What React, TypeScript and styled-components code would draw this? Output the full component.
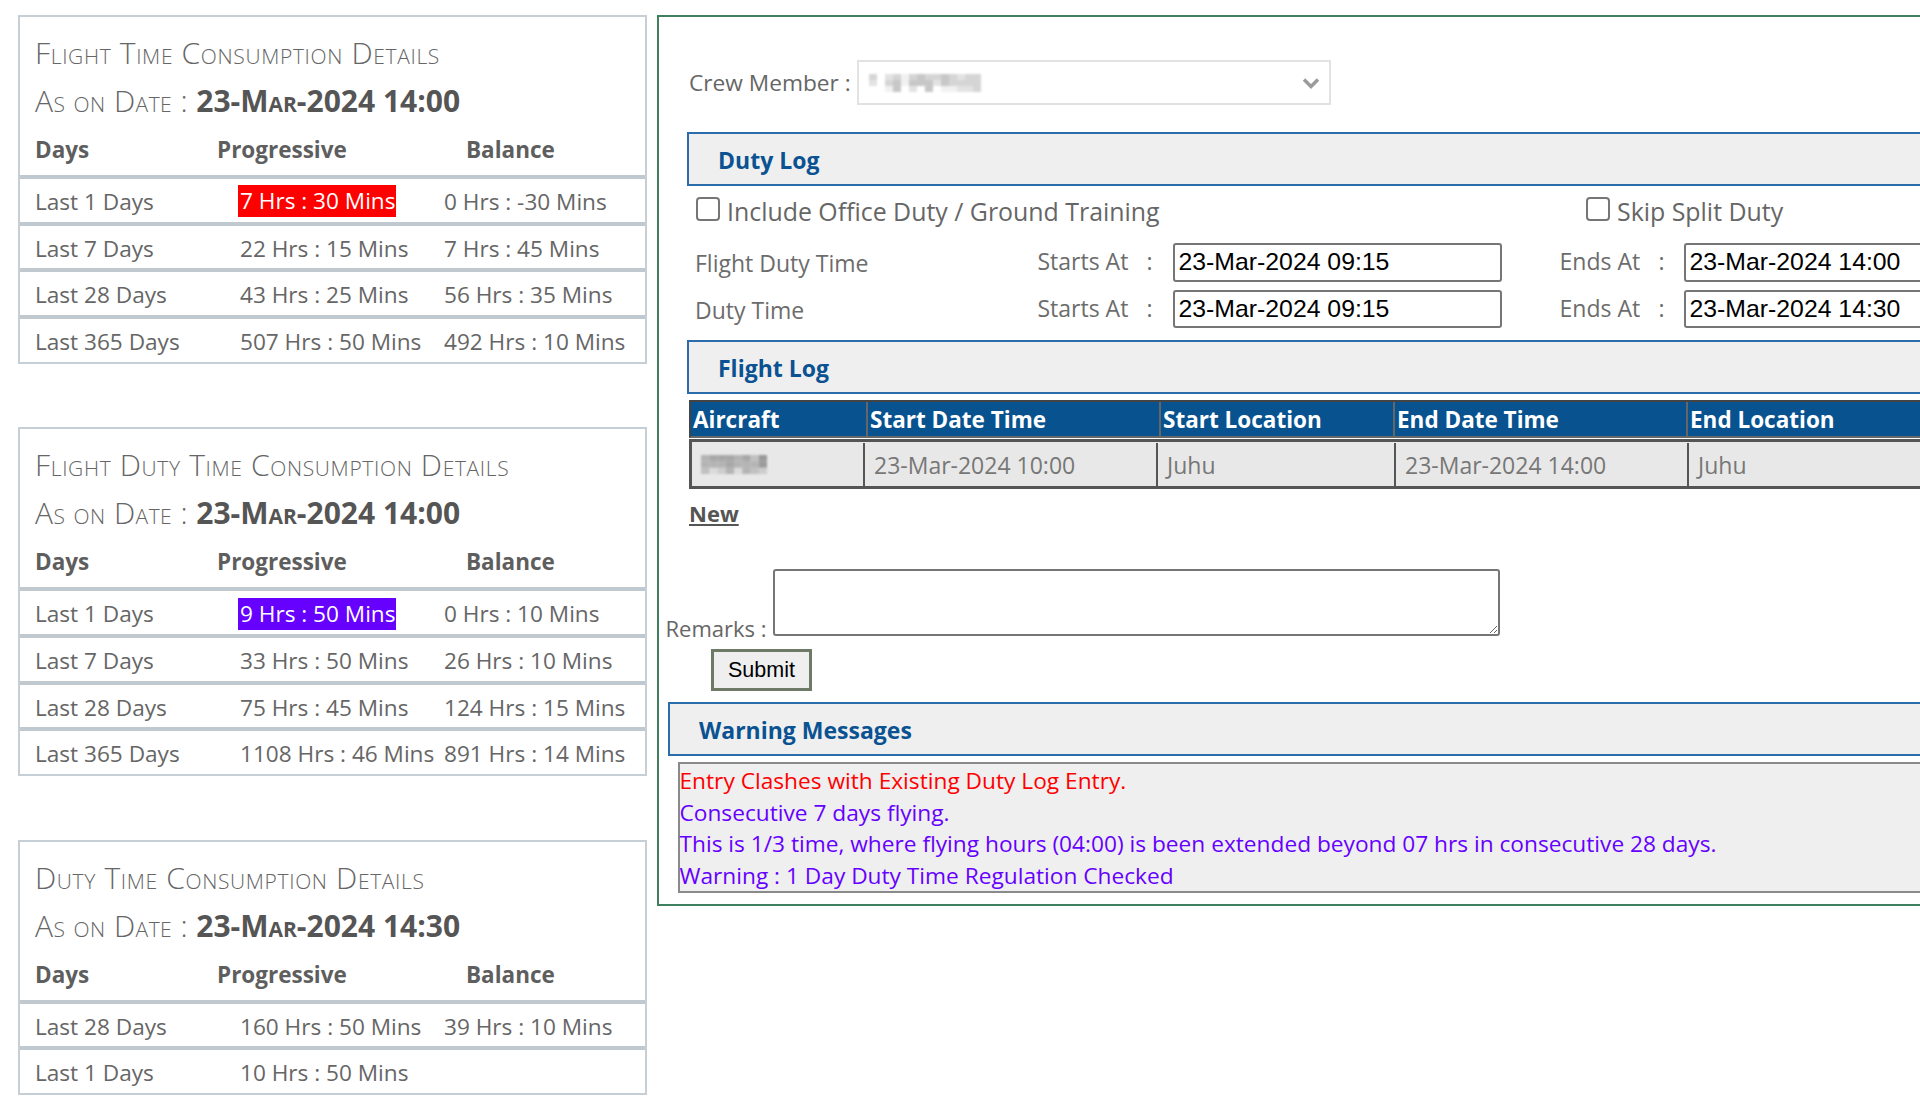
import React from "react";
import styled, { createGlobalStyle } from "styled-components";

const BODY_FONT = `"Open Sans", "Noto Sans", sans-serif`;
const FIELD_FONT = `"Liberation Sans", Arial, sans-serif`;

interface Consumption {
  days: string;
  progressive: string;
  balance?: string;
  alert?: string;
}

interface ConsumptionPanel {
  title: string;
  date: string;
  rows: Consumption[];
}

const panels: ConsumptionPanel[] = [
  {
    title: "Flight Time Consumption Details",
    date: "23-Mar-2024 14:00",
    rows: [
      { days: "Last 1 Days", progressive: "7 Hrs : 30 Mins", balance: "0 Hrs : -30 Mins", alert: "#ff0000" },
      { days: "Last 7 Days", progressive: "22 Hrs : 15 Mins", balance: "7 Hrs : 45 Mins" },
      { days: "Last 28 Days", progressive: "43 Hrs : 25 Mins", balance: "56 Hrs : 35 Mins" },
      { days: "Last 365 Days", progressive: "507 Hrs : 50 Mins", balance: "492 Hrs : 10 Mins" },
    ],
  },
  {
    title: "Flight Duty Time Consumption Details",
    date: "23-Mar-2024 14:00",
    rows: [
      { days: "Last 1 Days", progressive: "9 Hrs : 50 Mins", balance: "0 Hrs : 10 Mins", alert: "#6600ff" },
      { days: "Last 7 Days", progressive: "33 Hrs : 50 Mins", balance: "26 Hrs : 10 Mins" },
      { days: "Last 28 Days", progressive: "75 Hrs : 45 Mins", balance: "124 Hrs : 15 Mins" },
      { days: "Last 365 Days", progressive: "1108 Hrs : 46 Mins", balance: "891 Hrs : 14 Mins" },
    ],
  },
  {
    title: "Duty Time Consumption Details",
    date: "23-Mar-2024 14:30",
    rows: [
      { days: "Last 28 Days", progressive: "160 Hrs : 50 Mins", balance: "39 Hrs : 10 Mins" },
      { days: "Last 1 Days", progressive: "10 Hrs : 50 Mins" },
    ],
  },
];

const warnings = [
  { text: "Entry Clashes with Existing Duty Log Entry.", color: "#ff0000" },
  { text: "Consecutive 7 days flying.", color: "#6600ff" },
  { text: "This is 1/3 time, where flying hours (04:00) is been extended beyond 07 hrs in consecutive 28 days.", color: "#6600ff" },
  { text: "Warning : 1 Day Duty Time Regulation Checked", color: "#6600ff" },
];

const crewMosaic = [
  [3, 0, 2, 3, 1, 3, 4, 3, 3, 4, 3, 2, 3, 3],
  [2, 0, 3, 4, 1, 4, 4, 4, 2, 4, 3, 3, 3, 3],
  [0, 0, 1, 4, 0, 2, 0, 4, 0, 1, 1, 2, 2, 3],
];

const aircraftMosaic = [
  [4, 5, 5, 5, 4, 5, 3, 6],
  [4, 4, 4, 5, 4, 4, 4, 6],
  [3, 1, 2, 4, 1, 4, 3, 2],
];

function Mosaic(props: { cells: number[][]; width: number; height: number; shade: string }) {
  const rows = props.cells.length;
  const cols = props.cells[0].length;
  return (
    <MosaicSvg width={props.width} height={props.height} viewBox={`0 0 ${cols} ${rows}`} preserveAspectRatio="none">
      {props.cells.map((row, y) =>
        row.map((v, x) => (
          <rect key={`${x}-${y}`} x={x} y={y} width={1} height={1} fill={props.shade} opacity={v / 6} />
        ))
      )}
    </MosaicSvg>
  );
}

function Chevron() {
  return (
    <svg width="18" height="12" viewBox="0 0 18 12">
      <path d="M2 2.5 L9 9.5 L16 2.5" fill="none" stroke="#9b9b9b" strokeWidth="3.4" />
    </svg>
  );
}

export default function App() {
  return (
    <Page>
      <GlobalStyle />
      <LeftColumn>
        {panels.map((panel) => (
          <Panel key={panel.title}>
            <PanelTitle>{panel.title}</PanelTitle>
            <PanelDate>
              As on Date : <strong>{panel.date}</strong>
            </PanelDate>
            <HeadRow>
              <span>Days</span>
              <span>Progressive</span>
              <span>Balance</span>
            </HeadRow>
            {panel.rows.map((row, i) => (
              <DataRow key={row.days} $last={i === panel.rows.length - 1}>
                <span>{row.days}</span>
                {row.alert ? <Alert $color={row.alert}>{row.progressive}</Alert> : <span>{row.progressive}</span>}
                <span>{row.balance}</span>
              </DataRow>
            ))}
          </Panel>
        ))}
      </LeftColumn>

      <MainPanel>
        <CrewRow>
          <CrewLabel>Crew Member :</CrewLabel>
          <CrewSelect>
            <Mosaic cells={crewMosaic} width={112} height={18} shade="#ababab" />
            <Chevron />
          </CrewSelect>
        </CrewRow>

        <SectionHeader $top={27}>Duty Log</SectionHeader>
        <CheckRow>
          <CheckLabel $width={890}>
            <Check type="checkbox" />
            Include Office Duty / Ground Training
          </CheckLabel>
          <CheckLabel>
            <Check type="checkbox" />
            Skip Split Duty
          </CheckLabel>
        </CheckRow>
        <TimeRow $first>
          <TimeName>Flight Duty Time</TimeName>
          <span>Starts At</span>
          <span>:</span>
          <DateInput defaultValue="23-Mar-2024 09:15" />
          <span />
          <span>Ends At</span>
          <span>:</span>
          <DateInput defaultValue="23-Mar-2024 14:00" />
        </TimeRow>
        <TimeRow>
          <TimeName>Duty Time</TimeName>
          <span>Starts At</span>
          <span>:</span>
          <DateInput defaultValue="23-Mar-2024 09:15" />
          <span />
          <span>Ends At</span>
          <span>:</span>
          <DateInput defaultValue="23-Mar-2024 14:30" />
        </TimeRow>

        <SectionHeader $top={12}>Flight Log</SectionHeader>
        <LogHead>
          <span>Aircraft</span>
          <span>Start Date Time</span>
          <span>Start Location</span>
          <span>End Date Time</span>
          <span>End Location</span>
        </LogHead>
        <LogRow>
          <LogCell>
            <Mosaic cells={aircraftMosaic} width={66} height={19} shade="#9a9a9a" />
          </LogCell>
          <LogCell>23-Mar-2024 10:00</LogCell>
          <LogCell>Juhu</LogCell>
          <LogCell>23-Mar-2024 14:00</LogCell>
          <LogCell>Juhu</LogCell>
        </LogRow>
        <NewLink href="#new">New</NewLink>

        <RemarksRow>
          <RemarksLabel>Remarks :</RemarksLabel>
          <RemarksInput />
        </RemarksRow>
        <SubmitButton type="button">Submit</SubmitButton>

        <WarningHeader $top={11}>Warning Messages</WarningHeader>
        <WarningBox>
          {warnings.map((w) => (
            <WarningLine key={w.text} $color={w.color}>
              {w.text}
            </WarningLine>
          ))}
        </WarningBox>
      </MainPanel>
    </Page>
  );
}

const GlobalStyle = createGlobalStyle`
  html, body {
    margin: 0;
    background: #fff;
  }
  body {
    font-family: ${BODY_FONT};
    color: #666;
  }
  * {
    box-sizing: border-box;
  }
`;

const Page = styled.div`
  display: flex;
  align-items: flex-start;
  gap: 10px;
  width: 1920px;
  height: 1117px;
  padding: 15px 0 0 18px;
  overflow: hidden;
`;

const LeftColumn = styled.div`
  display: flex;
  flex-direction: column;
  gap: 63.6px;
  flex: 0 0 629px;
`;

const Panel = styled.section`
  border: 2px solid #c6ced6;
`;

const PanelTitle = styled.div`
  margin: 16px 0 0 15px;
  line-height: 40px;
  font-size: 30px;
  font-weight: 300;
  font-variant: small-caps;
  letter-spacing: 0.65px;
  white-space: nowrap;
`;

const PanelDate = styled.div`
  margin: 8px 0 0 15px;
  line-height: 40px;
  font-size: 30px;
  font-weight: 300;
  font-variant: small-caps;
  letter-spacing: 0.45px;
  white-space: nowrap;

  strong {
    font-weight: 700;
    letter-spacing: 0;
    color: #555;
  }
`;

const HeadRow = styled.div`
  display: grid;
  grid-template-columns: 182px 249px 1fr;
  height: 58px;
  padding: 9px 0 0 15px;
  line-height: 40px;
  font-size: 22.5px;
  font-weight: 700;
  color: #5e5e5e;
  border-bottom: 4px solid #c0c8d0;
`;

const DataRow = styled.div<{ $last?: boolean }>`
  display: grid;
  grid-template-columns: 205px 204px 1fr;
  align-items: center;
  height: ${(p) => (p.$last ? "42.7px" : "46.7px")};
  padding: 2px 0 0 15px;
  font-size: 22.6px;
  white-space: nowrap;
  border-bottom: ${(p) => (p.$last ? "0" : "4px solid #c0c8d0")};
`;

const Alert = styled.span<{ $color: string }>`
  justify-self: start;
  width: 158px;
  height: 32px;
  margin-left: -2px;
  padding-left: 2px;
  overflow: hidden;
  line-height: 32px;
  color: #fff;
  background: ${(p) => p.$color};
`;

const MainPanel = styled.main`
  flex: 0 0 1400px;
  padding-bottom: 11px;
  border: 2px solid #3f8060;
`;

const CrewRow = styled.div`
  display: flex;
  align-items: center;
  margin: 43px 0 0 30px;
  height: 45px;
  font-size: 22.7px;
`;

const CrewLabel = styled.span`
  flex: 0 0 167.5px;
  white-space: nowrap;
`;

const CrewSelect = styled.div`
  display: flex;
  align-items: center;
  justify-content: space-between;
  width: 474px;
  height: 45px;
  padding: 0 9px 0 10px;
  border: 2px solid #e2e2e2;
`;

const MosaicSvg = styled.svg`
  filter: blur(1px);
`;

const SectionHeader = styled.h2<{ $top: number }>`
  width: 1400px;
  height: 54px;
  margin: ${(p) => p.$top}px 0 0 28px;
  padding-left: 29px;
  line-height: 52px;
  font-size: 23px;
  font-weight: 700;
  color: #0a5291;
  background: #efefef;
  border: 2px solid #2b6dab;
`;

const CheckRow = styled.div`
  display: flex;
  align-items: center;
  height: 26px;
  margin: 12px 0 0 37px;
  font-size: 24.9px;
`;

const CheckLabel = styled.label<{ $width?: number }>`
  display: flex;
  align-items: center;
  gap: 7px;
  flex: 0 0 ${(p) => (p.$width ? `${p.$width}px` : "auto")};
  white-space: nowrap;
`;

const Check = styled.input`
  appearance: none;
  flex: none;
  width: 24px;
  height: 24px;
  margin: 0 0 4px;
  background: #fff;
  border: 2px solid #767676;
  border-radius: 4px;
`;

const TimeRow = styled.div<{ $first?: boolean }>`
  display: grid;
  grid-template-columns: 342.5px 109px 26px 329px 58px 99px 25px 329px;
  align-items: center;
  height: 38.5px;
  margin: ${(p) => (p.$first ? "19px" : "8px")} 0 0 36px;
  font-size: 23px;
  color: #6c6c6c;

  span {
    padding-bottom: 2px;
  }
`;

const TimeName = styled.span`
  && {
    padding: 2px 0 0;
  }
`;

const DateInput = styled.input`
  width: 329px;
  height: 38.5px;
  padding: 0 4px;
  font-family: ${FIELD_FONT};
  font-size: 24.8px;
  color: #000;
  background: #fff;
  border: 2px solid #767676;
  border-radius: 3px;
`;

const LOG_HEAD_COLUMNS = "177px 293px 234px 293px 300px";
const LOG_ROW_COLUMNS = "173px 293px 238px 293px 300px";

const LogHead = styled.div`
  display: grid;
  grid-template-columns: ${LOG_HEAD_COLUMNS};
  height: 38px;
  margin: 6px 0 0 30px;
  line-height: 36px;
  font-size: 22.5px;
  font-weight: 700;
  color: #fff;
  background: #07528f;
  border-top: 2px solid #444;
  border-bottom: 2px solid #666;
  border-left: 2px solid #444;

  span {
    padding-left: 2px;
    border-right: 2px solid #666;
    white-space: nowrap;
  }
`;

const LogRow = styled.div`
  display: grid;
  grid-template-columns: ${LOG_ROW_COLUMNS};
  height: 50px;
  margin: 1px 0 0 30px;
  padding-top: 1px;
  font-size: 23px;
  color: #777;
  background: #e8e8e8;
  border-top: 3px solid #555;
  border-bottom: 3px solid #555;
  border-left: 3px solid #555;
`;

const LogCell = styled.div`
  display: flex;
  align-items: center;
  padding-left: 9px;
  border-right: 2px solid #555;
  white-space: nowrap;
`;

const NewLink = styled.a`
  display: block;
  width: fit-content;
  margin: 9px 0 0 30px;
  line-height: 30px;
  font-size: 22px;
  font-weight: 700;
  color: #555;
`;

const RemarksRow = styled.div`
  display: flex;
  align-items: flex-end;
  margin: 41px 0 0 6.5px;
`;

const RemarksLabel = styled.span`
  flex: 0 0 107.5px;
  font-size: 22px;
  line-height: 30px;
  margin-bottom: -7px;
  white-space: nowrap;
`;

const RemarksInput = styled.textarea`
  display: block;
  width: 727px;
  height: 67px;
  background: #fff;
  border: 2px solid #767676;
  border-radius: 3px;
`;

const SubmitButton = styled.button`
  display: block;
  width: 101px;
  height: 42px;
  margin: 13px 0 0 52px;
  padding: 0;
  font-family: ${FIELD_FONT};
  font-size: 21.5px;
  color: #000;
  background: #efefef;
  border: 3px solid #6f7a66;
`;

const WarningHeader = styled(SectionHeader)`
  margin-left: 9px;
`;

const WarningBox = styled.div`
  width: 1400px;
  margin: 6px 0 0 18.5px;
  padding: 1px 0 0;
  background: #efefef;
  border: 2px solid #8a8a8a;
`;

const WarningLine = styled.div<{ $color: string }>`
  line-height: 31.5px;
  font-size: 22.7px;
  color: ${(p) => p.$color};
  white-space: nowrap;
`;
